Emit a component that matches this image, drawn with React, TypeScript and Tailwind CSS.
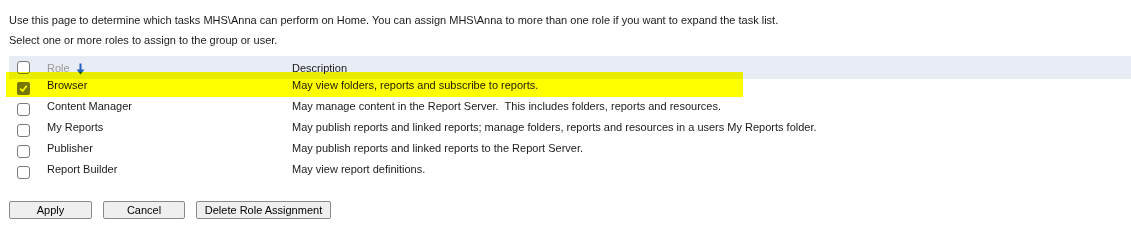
import React from "react";

const roles = [
  { name: "Browser", desc: "May view folders, reports and subscribe to reports.", checked: true },
  { name: "Content Manager", desc: "May manage content in the Report Server.\u00a0 This includes folders, reports and resources.", checked: false },
  { name: "My Reports", desc: "May publish reports and linked reports; manage folders, reports and resources in a users My Reports folder.", checked: false },
  { name: "Publisher", desc: "May publish reports and linked reports to the Report Server.", checked: false },
  { name: "Report Builder", desc: "May view report definitions.", checked: false },
];

function Box({ checked }: { checked?: boolean }) {
  if (checked) {
    return (
      <div className="w-[13px] h-[13px] rounded-[2px] bg-[#767676] flex items-center justify-center">
        <svg width="9" height="9" viewBox="0 0 9 9">
          <path d="M1.2 4.6 L3.6 7 L7.8 1.8" stroke="white" strokeWidth="1.7" fill="none" />
        </svg>
      </div>
    );
  }
  return <div className="w-[13px] h-[13px] rounded-[3px] border border-[#7a7a7a] bg-white" />;
}

export default function App() {
  return (
    <div className="relative w-[1131px] h-[243px] bg-white text-[11px] leading-[13px] text-[#1a1a1a] font-['Liberation_Sans',Arial,sans-serif]">
      <div className="pl-[9px] pt-[14px]">
        <p>Use this page to determine which tasks MHS\Anna can perform on Home. You can assign MHS\Anna to more than one role if you want to expand the task list.</p>
        <p className="mt-[7px]">Select one or more roles to assign to the group or user.</p>
      </div>

      <div className="ml-[9px] mt-[9px]">
        <div className="h-[23px] bg-[#e8ecf4] flex items-start">
          <div className="w-[38px] pl-[8px] pt-[5px]">
            <Box />
          </div>
          <div className="w-[245px] pt-[6px] flex items-start gap-[6px] text-[#999999]">
            <span>Role</span>
            <svg width="9" height="12" viewBox="0 0 9 12" className="mt-[1px]">
              <path d="M4.5 0.5 V8" stroke="#1f5fc4" strokeWidth="2" />
              <path d="M0.5 6.5 L4.5 11.5 L8.5 6.5 Z" fill="#1f5fc4" />
            </svg>
          </div>
          <div className="pt-[6px] text-[#1a1a1a]">Description</div>
        </div>

        {roles.map((r) => (
          <div key={r.name} className="h-[21px] flex items-start">
            <div className="w-[38px] pl-[8px] pt-[3px]">
              <Box checked={r.checked} />
            </div>
            <div className="w-[245px]">{r.name}</div>
            <div>{r.desc}</div>
          </div>
        ))}
      </div>

      <div className="ml-[9px] mt-[17px] flex gap-[11px]">
        {[
          { label: "Apply", w: "w-[83px]" },
          { label: "Cancel", w: "w-[82px]" },
          { label: "Delete Role Assignment", w: "w-[135px]" },
        ].map((b) => (
          <button
            key={b.label}
            className={`${b.w} h-[18px] rounded-[2px] border border-[#8a8a8a] bg-[#efefef] text-[11px] leading-[16px] text-black text-center`}
          >
            {b.label}
          </button>
        ))}
      </div>

      <div className="absolute left-[6px] top-[72px] w-[737px] h-[25px] bg-[#ffff00] mix-blend-multiply pointer-events-none" />
    </div>
  );
}
